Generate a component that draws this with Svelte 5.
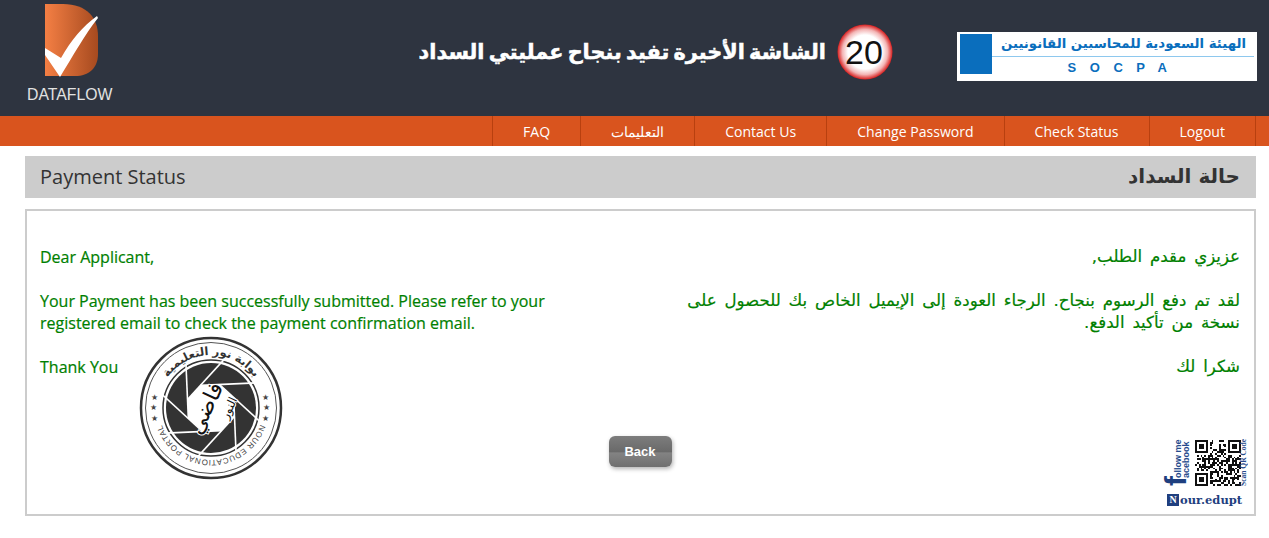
<script lang="ts">
  const navItems = ["FAQ", "التعليمات", "Contact Us", "Change Password", "Check Status", "Logout"];

  // aperture blades of the stamp
  const cx = 72, cy = 72;
  const blades = 8;
  const hole = Array.from({ length: blades }, (_, i) => {
    const a = ((i * 360) / blades - 70) * Math.PI / 180;
    return { x: cx + 25 * Math.cos(a), y: cy + 25 * Math.sin(a) };
  });
  const holePoints = hole.map((p) => `${p.x},${p.y}`).join(" ");
  const bladeLines = hole.map((p, i) => {
    const q = hole[(i + 1) % blades];
    const dx = q.x - p.x, dy = q.y - p.y;
    const len = Math.hypot(dx, dy);
    return { x1: p.x, y1: p.y, x2: p.x + (dx / len) * 56, y2: p.y + (dy / len) * 56 };
  });

  // fake QR modules, fixed seed so it stays the same between runs
  const size = 25;
  let seed = 1337;
  function rnd() {
    seed = (seed * 16807) % 2147483647;
    return seed / 2147483647;
  }
  function inFinder(x: number, y: number) {
    return (x < 8 && y < 8) || (x > 16 && y < 8) || (x < 8 && y > 16);
  }
  const modules: { x: number; y: number }[] = [];
  for (let y = 0; y < size; y++) {
    for (let x = 0; x < size; x++) {
      if (!inFinder(x, y) && rnd() > 0.5) modules.push({ x, y });
    }
  }
  const finders = [
    { x: 0, y: 0 },
    { x: 18, y: 0 },
    { x: 0, y: 18 },
  ];
</script>

<div class="page">
  <header class="top">
    <div class="brand">
      <svg class="mark" width="54" height="74" viewBox="0 0 54 74">
        <defs>
          <linearGradient id="dGrad" x1="0" x2="1" y1="0" y2="0">
            <stop offset="0" stop-color="#f47f44" />
            <stop offset="1" stop-color="#a64a1f" />
          </linearGradient>
        </defs>
        <path d="M0 0 H18 C42 0 53 14 53 32 V50 C53 64 44 72 30 72 H0 Z" fill="url(#dGrad)" />
        <path d="M0 44 L16 54 C26 36 38 22 52 12 L53 14 C40 30 28 52 15 73 L0 51 Z" fill="#fff" />
      </svg>
      <span class="brand-name">DATAFLOW</span>
    </div>
    <div class="headline">
      <span class="headline-text" dir="rtl">الشاشة الأخيرة تفيد بنجاح عمليتي السداد</span>
      <svg class="sign" width="56" height="56" viewBox="0 0 56 56">
        <defs>
          <radialGradient id="signGrad">
            <stop offset="0.62" stop-color="#fff" />
            <stop offset="0.82" stop-color="#f3b5b5" />
            <stop offset="1" stop-color="#d81e1e" />
          </radialGradient>
        </defs>
        <circle cx="28" cy="28" r="27.5" fill="url(#signGrad)" />
        <text x="27" y="40" text-anchor="middle" class="sign-num">20</text>
      </svg>
    </div>
    <div class="socpa">
      <div class="socpa-square"></div>
      <div class="socpa-text">
        <span class="socpa-ar" dir="rtl">الهيئة السعودية للمحاسبين القانونيين</span>
        <span class="socpa-en">SOCPA</span>
      </div>
    </div>
  </header>

  <nav class="menu">
    {#each navItems as item}
      <a href="#top" class="menu-item">{item}</a>
    {/each}
  </nav>

  <main class="content">
    <div class="title-bar">
      <span class="title-en">Payment Status</span>
      <span class="title-ar" dir="rtl">حالة السداد</span>
    </div>

    <section class="box">
      <div class="columns">
        <div class="col">
          <p>Dear Applicant,</p>
          <p>Your Payment has been successfully submitted. Please refer to your registered email to check the payment confirmation email.</p>
          <p>Thank You</p>
        </div>
        <div class="col ar" dir="rtl">
          <p>عزيزي مقدم الطلب,</p>
          <p>لقد تم دفع الرسوم بنجاح. الرجاء العودة إلى الإيميل الخاص بك للحصول على نسخة من تأكيد الدفع.</p>
          <p>شكرا لك</p>
        </div>
      </div>

      <div class="actions">
        <button class="back" type="button">Back</button>
        <div class="qr-card">
          <div class="qr-row">
            <div class="follow">
              <span>ollow me</span>
              <span>acebook</span>
            </div>
            <svg class="qr" width="46" height="46" viewBox="0 0 25 25" shape-rendering="crispEdges">
              {#each modules as m}
                <rect x={m.x} y={m.y} width="1" height="1" fill="#111" />
              {/each}
              {#each finders as f}
                <rect x={f.x + 0.5} y={f.y + 0.5} width="6" height="6" fill="none" stroke="#111" />
                <rect x={f.x + 2} y={f.y + 2} width="3" height="3" fill="#111" />
              {/each}
            </svg>
            <span class="scan">Scan QR Code</span>
          </div>
          <span class="fb-f">f</span>
          <div class="nour">
            <span class="nour-n">N</span>
            <span class="nour-text">our.edupt</span>
          </div>
        </div>
      </div>

      <svg class="stamp" width="144" height="144" viewBox="0 0 144 144">
        <defs>
          <path id="arcTop" d="M19 72 A53 53 0 0 1 125 72" />
          <path id="arcBottom" d="M120.9 54.2 A52 52 0 1 1 23.1 54.2" />
        </defs>
        <circle cx="72" cy="72" r="70" fill="#fff" stroke="#333" stroke-width="2.5" />
        <circle cx="72" cy="72" r="65.5" fill="none" stroke="#555" stroke-width="1" />
        <circle cx="72" cy="72" r="45" fill="#333" />
        <circle cx="72" cy="72" r="48" fill="none" stroke="#333" stroke-width="1.5" />
        {#each bladeLines as l}
          <line x1={l.x1} y1={l.y1} x2={l.x2} y2={l.y2} stroke="#fff" stroke-width="1.6" />
        {/each}
        <polygon points={holePoints} fill="#fff" />
        <text class="stamp-ar"><textPath href="#arcTop" startOffset="50%" text-anchor="middle">بوابة نور التعليمية</textPath></text>
        <text class="stamp-en"><textPath href="#arcBottom" startOffset="50%" text-anchor="middle">NOUR EDUCATIONAL PORTAL</textPath></text>
        <text class="stamp-star" x="12" y="64">★</text>
        <text class="stamp-star" x="11" y="74">★</text>
        <text class="stamp-star" x="12" y="85">★</text>
        <text class="stamp-star" x="123" y="64">★</text>
        <text class="stamp-star" x="124" y="74">★</text>
        <text class="stamp-star" x="123" y="85">★</text>
        <text class="stamp-sign" x="66" y="80" text-anchor="middle" transform="rotate(-65 66 72)">فاضي</text>
        <text class="stamp-sign small" x="90" y="76" text-anchor="middle" transform="rotate(-65 90 72)">النور</text>
      </svg>
    </section>
  </main>
</div>

<style>
  :global(body) {
    margin: 0;
    background: #fff;
    font-family: "Open Sans", sans-serif;
  }

  .page {
    width: 1269px;
    height: 538px;
    overflow: hidden;
  }

  .top {
    height: 116px;
    background: #2e3440;
    display: flex;
    align-items: flex-start;
    box-sizing: border-box;
    padding-left: 27px;
  }

  .brand {
    width: 87px;
    display: flex;
    flex-direction: column;
    align-items: flex-start;
    padding-top: 4px;
  }

  .mark {
    margin-left: 18px;
  }

  .brand-name {
    font-family: "Liberation Sans", sans-serif;
    font-size: 15.8px;
    line-height: 17px;
    margin-top: 8px;
    color: #e2e2e2;
    white-space: nowrap;
  }

  .headline {
    margin-left: 307px;
    margin-top: 24px;
    width: 472px;
    display: flex;
    justify-content: flex-end;
    align-items: center;
    gap: 11px;
  }

  .headline-text {
    color: #fff;
    font-family: "DejaVu Sans", sans-serif;
    font-size: 20.8px;
    font-weight: 700;
    word-spacing: -3px;
    -webkit-text-stroke: 0.5px #fff;
    white-space: nowrap;
  }

  .sign {
    flex-shrink: 0;
  }

  .sign-num {
    font-family: "Liberation Sans", sans-serif;
    font-size: 34px;
    fill: #111;
  }

  .socpa {
    margin-left: 64px;
    margin-top: 32px;
    width: 300px;
    height: 49px;
    background: #fff;
    display: flex;
    box-sizing: border-box;
    padding: 2px 3px;
  }

  .socpa-square {
    width: 32px;
    height: 40px;
    background: #0a6ebd;
    flex-shrink: 0;
  }

  .socpa-text {
    flex: 1;
    display: flex;
    flex-direction: column;
    align-items: center;
    color: #0a6ebd;
  }

  .socpa-ar {
    width: 100%;
    box-sizing: border-box;
    padding-right: 8px;
    font-family: "DejaVu Sans", sans-serif;
    font-size: 13.3px;
    font-weight: 700;
    line-height: 19px;
    height: 25px;
    white-space: nowrap;
    border-bottom: 1px solid #8ec8ee;
  }

  .socpa-en {
    font-family: "Liberation Sans", sans-serif;
    font-size: 13px;
    font-weight: 700;
    line-height: 22px;
    letter-spacing: 13.5px;
    margin-right: -14px;
    padding-right: 12px;
  }

  .menu {
    height: 30px;
    background: #d9541e;
    display: flex;
    justify-content: flex-end;
    padding-right: 13px;
  }

  .menu-item {
    color: #fff;
    font-size: 14.06px;
    line-height: 32px;
    text-decoration: none;
    padding: 0 30px;
    border-left: 1px solid #b8400f;
  }

  .menu-item:last-child {
    border-right: 1px solid #b8400f;
  }

  .content {
    padding: 10px 13px 0 25px;
  }

  .title-bar {
    height: 42px;
    box-sizing: border-box;
    background: #ccc;
    display: flex;
    justify-content: space-between;
    align-items: center;
    padding: 0 16px 2px 15px;
    color: #333;
  }

  .title-en {
    font-size: 20px;
  }

  .title-ar {
    font-family: "DejaVu Sans", sans-serif;
    font-size: 20px;
    font-weight: 700;
  }

  .box {
    position: relative;
    margin-top: 11px;
    height: 307px;
    box-sizing: border-box;
    border: 2px solid #ccc;
    padding: 35px 14px 0 13px;
  }

  .columns {
    display: grid;
    grid-template-columns: 1fr 1fr;
    gap: 60px;
  }

  .col {
    color: #008000;
    font-size: 16px;
    line-height: 22px;
    -webkit-text-stroke: 0.2px #008000;
  }

  .col p {
    margin: 0 0 22px;
  }

  .col.ar {
    font-family: "DejaVu Sans", sans-serif;
    font-size: 16.6px;
    word-spacing: 2.6px;
  }

  .actions {
    display: grid;
    grid-template-columns: 1fr auto 1fr;
    align-items: start;
    margin-top: 36px;
  }

  .back {
    grid-column: 2;
    width: 63px;
    height: 31px;
    border: 0;
    border-radius: 6px;
    background: linear-gradient(#7d7d7d, #6a6a6a 50%, #838383 55%, #6f6f6f);
    box-shadow: 1px 2px 4px rgba(0, 0, 0, 0.3);
    color: #fff;
    font-family: "Liberation Sans", sans-serif;
    font-size: 13px;
    font-weight: 700;
  }

  .qr-card {
    grid-column: 3;
    justify-self: end;
    position: relative;
    width: 80px;
    margin-top: 4px;
    margin-right: -7px;
  }

  .qr-row {
    display: flex;
    justify-content: flex-end;
    align-items: flex-start;
    height: 54px;
  }

  .follow {
    writing-mode: vertical-rl;
    transform: rotate(180deg);
    display: flex;
    flex-direction: column;
    margin-right: 5px;
    font-family: "Liberation Sans", sans-serif;
    font-size: 9px;
    font-weight: 700;
    line-height: 8px;
    color: #274b8c;
    height: 38px;
    white-space: nowrap;
  }

  .scan {
    writing-mode: vertical-rl;
    font-family: "Liberation Serif", serif;
    font-size: 7.5px;
    font-weight: 700;
    line-height: 6px;
    height: 46px;
    text-align: center;
    transform: rotate(180deg);
    color: #274b8c;
    white-space: nowrap;
  }

  .fb-f {
    position: absolute;
    left: 1px;
    top: 33px;
    width: 16px;
    height: 16px;
    font-family: "Liberation Sans", sans-serif;
    font-size: 30px;
    font-weight: 700;
    line-height: 16px;
    text-align: center;
    transform: rotate(-90deg);
    color: #1f3f7f;
  }

  .nour {
    display: flex;
    align-items: center;
    gap: 1px;
    height: 12px;
  }

  .nour-n {
    width: 12px;
    height: 12px;
    background: #1f3f7f;
    color: #fff;
    font-family: "Liberation Serif", serif;
    font-size: 10px;
    font-weight: 700;
    line-height: 12px;
    text-align: center;
  }

  .nour-text {
    font-family: "DejaVu Serif", serif;
    font-size: 11.5px;
    font-weight: 700;
    color: #1f3f7f;
  }

  .stamp {
    position: absolute;
    left: 112px;
    top: 125px;
  }

  .stamp-ar {
    font-family: "DejaVu Sans", sans-serif;
    font-size: 11.5px;
    font-weight: 700;
    fill: #333;
  }

  .stamp-en {
    font-family: "Liberation Sans", sans-serif;
    font-size: 8px;
    letter-spacing: 0.6px;
    fill: #444;
  }

  .stamp-star {
    font-family: "DejaVu Sans", sans-serif;
    font-size: 8px;
    fill: #444;
  }

  .stamp-sign {
    font-family: "DejaVu Sans", sans-serif;
    font-size: 22px;
    fill: #111;
    stroke: #fff;
    stroke-width: 2px;
    paint-order: stroke;
  }

  .stamp-sign.small {
    font-size: 12px;
  }
</style>
